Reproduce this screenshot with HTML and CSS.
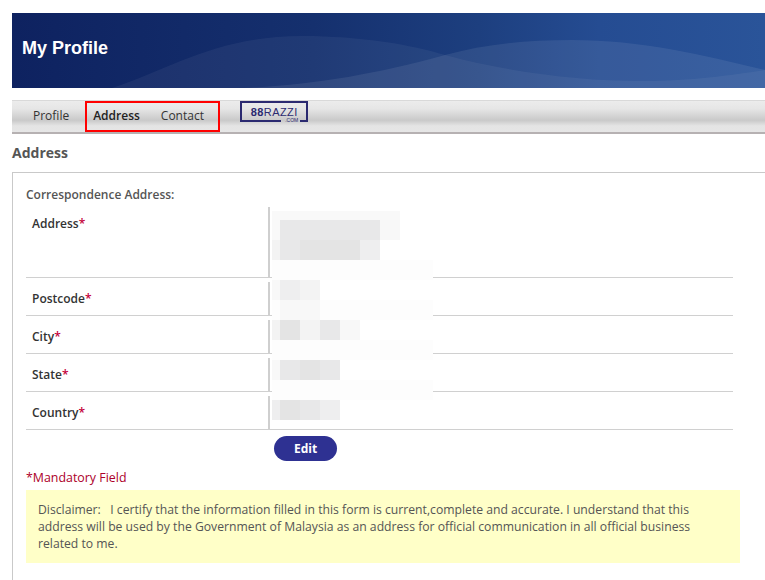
FILE: index.html
```html
<!DOCTYPE html>
<html lang="en">
<head>
    <meta charset="UTF-8">
    <meta name="viewport" content="width=device-width, initial-scale=1.0">
    <title>My Profile</title>
    <link rel="stylesheet" href="styles.css">
</head>
<body>
    <header class="banner">
        <svg class="banner-waves" viewBox="0 0 753 75" preserveAspectRatio="none" aria-hidden="true">
            <path d="M100 75 C160 55 205 23 290 23 C350 23 400 32 433 42 C500 60 570 68 630 68 C680 68 720 62 753 57 L753 75 Z" fill="#fff" fill-opacity="0.05"/>
            <path d="M230 75 C300 72 360 62 433 42 C470 32 510 27 560 27 C630 27 690 42 753 57 L753 75 Z" fill="#fff" fill-opacity="0.08"/>
        </svg>
        <h1>My Profile</h1>
    </header>

    <nav class="tabs">
        <a class="tab" href="#">Profile</a>
        <div class="tab-group">
            <a class="tab active" href="#">Address</a>
            <a class="tab" href="#">Contact</a>
        </div>
        <a class="logo" href="#">
            <span class="logo-name"><b>88</b>RAZZI</span>
            <span class="logo-com">.COM</span>
        </a>
    </nav>

    <h2 class="section-title">Address</h2>

    <section class="panel">
        <div class="panel-title">Correspondence Address:</div>

        <div class="fields">
            <div class="field field-tall">
                <div class="field-label">Address<span class="req">*</span></div>
                <div class="field-value"></div>
            </div>
            <div class="field">
                <div class="field-label">Postcode<span class="req">*</span></div>
                <div class="field-value"></div>
            </div>
            <div class="field">
                <div class="field-label">City<span class="req">*</span></div>
                <div class="field-value"></div>
            </div>
            <div class="field">
                <div class="field-label">State<span class="req">*</span></div>
                <div class="field-value"></div>
            </div>
            <div class="field">
                <div class="field-label">Country<span class="req">*</span></div>
                <div class="field-value"></div>
            </div>

            <!-- redacted values -->
            <div class="mosaic" aria-hidden="true">
                <div class="m-row m-short"><i class="lead s0"></i><i class="s0"></i><i class="s0"></i><i class="s0"></i><i class="s0"></i><i class="s0"></i><i class="s0"></i></div>
                <div class="m-row"><i class="lead s0"></i><i class="s2"></i><i class="s2"></i><i class="s2"></i><i class="s2"></i><i class="s2"></i><i class="s5"></i></div>
                <div class="m-row"><i class="lead s4"></i><i class="s2"></i><i class="s1"></i><i class="s1"></i><i class="s1"></i><i class="s3"></i></div>
                <div class="m-row"><i class="fill s6"></i></div>
                <div class="m-row"><i class="lead s5"></i><i class="s3"></i><i class="s4"></i></div>
                <div class="m-row"><i class="lead s6"></i><i class="s5"></i><i class="s5"></i><i class="fill s6"></i></div>
                <div class="m-row"><i class="lead s4"></i><i class="s1"></i><i class="s4"></i><i class="s2"></i><i class="s5"></i></div>
                <div class="m-row"><i class="fill s6"></i></div>
                <div class="m-row"><i class="lead s5"></i><i class="s2"></i><i class="s1"></i><i class="s2"></i></div>
                <div class="m-row"><i class="fill s6"></i></div>
                <div class="m-row"><i class="lead s3"></i><i class="s1"></i><i class="s2"></i><i class="s3"></i></div>
            </div>
        </div>

        <div class="actions">
            <button class="btn-edit" type="button">Edit</button>
        </div>

        <div class="mandatory">*Mandatory Field</div>

        <div class="disclaimer">Disclaimer: &nbsp; I certify that the information filled in this form is current,complete and accurate. I understand that this address will be used by the Government of Malaysia as an address for official communication in all official business related to me.</div>
    </section>
</body>
</html>
```

FILE: styles.css
```css
html, body {
    margin: 0;
    padding: 0;
    height: 580px;
    overflow: hidden;
    background: #fff;
}
body {
    font-family: "Open Sans", "Noto Sans", sans-serif;
    font-size: 12px;
    color: #4a4a4a;
}
.banner {
    position: relative;
    margin: 13px 0 12px 12px;
    height: 75px;
    display: flex;
    align-items: center;
    background: linear-gradient(90deg, #0e2260 0%, #15306e 40%, #1d3f7f 62%, #254c92 78%, #2a5499 100%);
}
.banner-waves {
    position: absolute;
    top: 0;
    left: 0;
    width: 100%;
    height: 100%;
}
.banner h1 {
    position: relative;
    margin: 0 0 4px 10px;
    font-family: "Liberation Sans", Arial, sans-serif;
    font-size: 18px;
    font-weight: bold;
    color: #fff;
}
.tabs {
    margin-left: 12px;
    height: 31px;
    display: flex;
    align-items: stretch;
    border-top: 1px solid #d9d9d9;
    border-bottom: 2px solid #b6b1b2;
    background: linear-gradient(180deg, #ececec 0%, #e6e6e6 25%, #c9c9c9 62%, #e4e4e4 80%, #e6e6e6 100%);
}
.tab {
    display: flex;
    align-items: center;
    padding-bottom: 2px;
    color: #333;
    text-decoration: none;
}
.tabs > .tab {
    padding-left: 21px;
    padding-right: 16px;
}
.tab-group {
    display: flex;
    gap: 21px;
    padding-left: 6px;
    border: 2px solid #f00;
    box-sizing: border-box;
    width: 135px;
}
.tab.active {
    font-weight: 600;
    color: #222;
}
.logo {
    position: relative;
    align-self: flex-start;
    margin: 0 0 0 20px;
    width: 68px;
    height: 21px;
    box-sizing: border-box;
    border: 2px solid #2b2a70;
    border-bottom-color: transparent;
    text-align: center;
    text-decoration: none;
    color: #2b2a70;
}
.logo::before,
.logo::after {
    content: "";
    position: absolute;
    bottom: -2px;
    height: 2px;
    background: #2b2a70;
}
.logo::before {
    left: -2px;
    width: 41px;
}
.logo::after {
    right: -2px;
    width: 8px;
}
.logo-name {
    display: block;
    font-family: "Liberation Sans", Arial, sans-serif;
    font-size: 11px;
    line-height: 18px;
    letter-spacing: 0.4px;
}
.logo-com {
    position: absolute;
    right: 8px;
    bottom: -3px;
    font-family: "Liberation Sans", Arial, sans-serif;
    font-size: 5px;
    line-height: 5px;
}
.section-title {
    margin: 10px 0 10px 12px;
    font-size: 14px;
    line-height: 18px;
    font-weight: bold;
    color: #555;
}
.panel {
    margin-left: 12px;
    padding: 14px 0 0 13px;
    height: 410px;
    border: 1px solid #c9c9c9;
    border-right: none;
    border-bottom: none;
}
.panel-title {
    font-weight: 600;
    line-height: 16px;
    color: #555;
}
.fields {
    position: relative;
    width: 707px;
    margin-top: 4px;
}
.field {
    display: grid;
    grid-template-columns: 242px 1fr;
    height: 33px;
    margin-top: 4px;
    border-bottom: 1px solid #d0d0d0;
}
.field:first-child {
    margin-top: 0;
}
.field-tall {
    height: 70px;
}
.field-label {
    padding: 9px 0 0 6px;
    font-weight: 600;
    line-height: 16px;
    color: #333;
}
.field-value {
    border-left: 2px solid #cfcfcf;
}
.req {
    color: #c4003a;
}
.mosaic {
    position: absolute;
    top: 4px;
    left: 246px;
    width: 161px;
}
.m-row {
    display: flex;
    height: 20px;
}
.m-row.m-short {
    height: 9px;
}
.m-row i {
    display: block;
    width: 20px;
    background: #fff;
}
.m-row i.lead {
    width: 8px;
}
.m-row i.fill {
    flex: 1;
}
.s0 { background: #f9f9f9 !important; }
.s1 { background: #e4e4e4 !important; }
.s2 { background: #e8e8e9 !important; }
.s3 { background: #eeeeef !important; }
.s4 { background: #f3f3f3 !important; }
.s5 { background: #f8f8f8 !important; }
.s6 { background: #fdfdfd !important; }
.actions {
    width: 707px;
    padding-top: 6px;
    padding-left: 248px;
    box-sizing: border-box;
}
.btn-edit {
    display: block;
    width: 63px;
    height: 25px;
    padding: 0;
    border: none;
    border-radius: 13px;
    background: #2e3192;
    color: #fff;
    font-family: inherit;
    font-size: 12px;
    font-weight: bold;
}
.mandatory {
    margin-top: 8px;
    font-size: 12.4px;
    line-height: 18px;
    color: #ad0029;
}
.disclaimer {
    width: 714px;
    height: 73px;
    margin-top: 3px;
    padding: 11px 40px 0 12px;
    box-sizing: border-box;
    background: #ffffc8;
    font-size: 12.2px;
    line-height: 17px;
    color: #555;
}
```
